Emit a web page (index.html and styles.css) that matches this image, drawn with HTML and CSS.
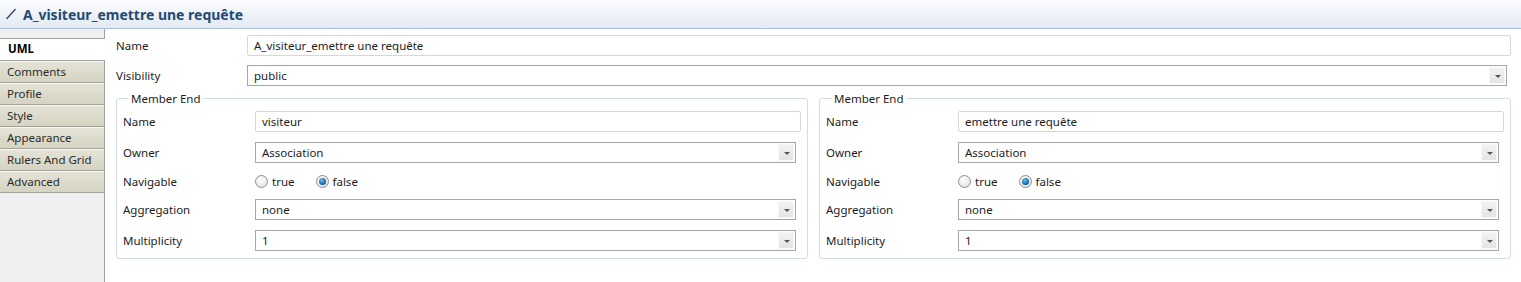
FILE: index.html
```html
<!DOCTYPE html>
<html lang="fr">
<head>
  <meta charset="UTF-8" />
  <title>Properties</title>
  <link rel="stylesheet" href="styles.css">
</head>
<body>
  <header class="title-bar">
    <svg class="title-icon" width="12" height="13" viewBox="0 0 12 13">
      <line x1="1.5" y1="12" x2="10.5" y2="2" stroke="#2b4a6e" stroke-width="1.3" />
    </svg>
    <h1>A_visiteur_emettre une requête</h1>
  </header>

  <div class="main">
    <nav class="tabs">
      <div class="tabs-top"></div>
      <div class="tab active">UML</div>
      <div class="tab">Comments</div>
      <div class="tab">Profile</div>
      <div class="tab">Style</div>
      <div class="tab">Appearance</div>
      <div class="tab">Rulers And Grid</div>
      <div class="tab">Advanced</div>
    </nav>

    <section class="content">
      <div class="form top-form">
        <label>Name</label>
        <div class="text">A_visiteur_emettre une requête</div>
        <label>Visibility</label>
        <div class="combo">public<span class="arrow"></span></div>
      </div>

      <div class="ends">
        <fieldset class="group">
          <legend>Member End</legend>
          <div class="form end-form">
            <label>Name</label>
            <div class="text">visiteur</div>
            <label>Owner</label>
            <div class="combo">Association<span class="arrow"></span></div>
            <label>Navigable</label>
            <div class="radios">
              <span class="radio"></span><span class="radio-label">true</span>
              <span class="radio checked"></span><span class="radio-label">false</span>
            </div>
            <label>Aggregation</label>
            <div class="combo">none<span class="arrow"></span></div>
            <label>Multiplicity</label>
            <div class="combo">1<span class="arrow"></span></div>
          </div>
        </fieldset>

        <fieldset class="group">
          <legend>Member End</legend>
          <div class="form end-form">
            <label>Name</label>
            <div class="text">emettre une requête</div>
            <label>Owner</label>
            <div class="combo">Association<span class="arrow"></span></div>
            <label>Navigable</label>
            <div class="radios">
              <span class="radio"></span><span class="radio-label">true</span>
              <span class="radio checked"></span><span class="radio-label">false</span>
            </div>
            <label>Aggregation</label>
            <div class="combo">none<span class="arrow"></span></div>
            <label>Multiplicity</label>
            <div class="combo">1<span class="arrow"></span></div>
          </div>
        </fieldset>
      </div>
    </section>
  </div>
</body>
</html>
```

FILE: styles.css
```css
* {
  margin: 0;
  padding: 0;
  box-sizing: border-box;
}

html, body {
  height: 100%;
  overflow: hidden;
}

body {
  font-family: "Segoe UI", "Noto Sans", sans-serif;
  font-size: 11.5px;
  color: #1c1c1c;
  background: #fff;
}

.title-bar {
  height: 29px;
  display: flex;
  align-items: center;
  padding-left: 5px;
  background: linear-gradient(#fbfcfe, #e3eaf3);
  border-bottom: 1px solid #a9c0d8;
}

.title-icon {
  margin-right: 6px;
  margin-top: -1px;
}

.title-bar h1 {
  font-size: 14px;
  font-weight: 700;
  color: #234a74;
}

.main {
  display: flex;
  height: 253px;
}

.tabs {
  width: 105px;
  flex: none;
  background: #f0f0f0;
  border-right: 1px solid #a0a0a0;
}

.tabs-top {
  height: 10px;
  border-bottom: 1px solid #a0a0a0;
}

.tab {
  height: 22px;
  line-height: 20px;
  padding-left: 7px;
  color: #2b2b2b;
  background: linear-gradient(#e4e3d6, #d5d3c1);
  border-top: 1px solid #f7f7f2;
  border-bottom: 1px solid #a3a39a;
}

.tab.active {
  position: relative;
  margin-right: -1px;
  padding-left: 8px;
  font-weight: 700;
  color: #000;
  background: #fff;
  border-top: none;
  border-bottom: 1px solid #a0a0a0;
}

.content {
  flex: 1;
  padding: 6px 10px 0 11px;
}

.form {
  display: grid;
  align-items: center;
}

.top-form {
  grid-template-columns: 131px 1fr;
  row-gap: 9px;
}

.top-form .combo {
  margin-right: 4px;
}

.text,
.combo {
  height: 21px;
  line-height: 19px;
  padding-left: 6px;
  white-space: nowrap;
}

.text {
  border: 1px solid #d7d7d7;
  border-radius: 2px;
}

.combo {
  position: relative;
  border: 1px solid #a6a6a6;
}

.arrow {
  position: absolute;
  top: 1px;
  right: 1px;
  width: 16px;
  height: 17px;
  background: linear-gradient(#f2f2f2, #e4e4e4);
  border: 1px solid #f7f7f7;
}

.arrow::after {
  content: "";
  position: absolute;
  left: 5px;
  top: 7px;
  border-left: 3px solid transparent;
  border-right: 3px solid transparent;
  border-top: 3px solid #555;
}

.ends {
  display: flex;
  gap: 11px;
  margin-top: 5px;
}

.group {
  flex: 1;
  border: 1px solid #d3dde5;
  border-radius: 3px;
  padding: 5px 6px 7px 6px;
}

.group legend {
  margin-left: 6px;
  padding: 0 2px;
  color: #1c1c1c;
}

.end-form {
  grid-template-columns: 132px 1fr;
  grid-template-rows: 21px 21px 16px 21px 21px;
  row-gap: 10px;
}

.end-form .combo {
  margin-right: 5px;
}

.radios {
  display: flex;
  align-items: center;
}

.radio {
  width: 13px;
  height: 13px;
  border-radius: 50%;
  border: 1px solid #8e8f8f;
  background: radial-gradient(circle at 40% 35%, #ffffff, #dcdcdc);
  position: relative;
}

.radio.checked::after {
  content: "";
  position: absolute;
  left: 2px;
  top: 2px;
  width: 7px;
  height: 7px;
  border-radius: 50%;
  background: radial-gradient(circle at 40% 35%, #6cc0f2, #0d5a9a 70%);
}

.radio-label {
  margin-left: 4px;
  margin-right: 21px;
}
```
